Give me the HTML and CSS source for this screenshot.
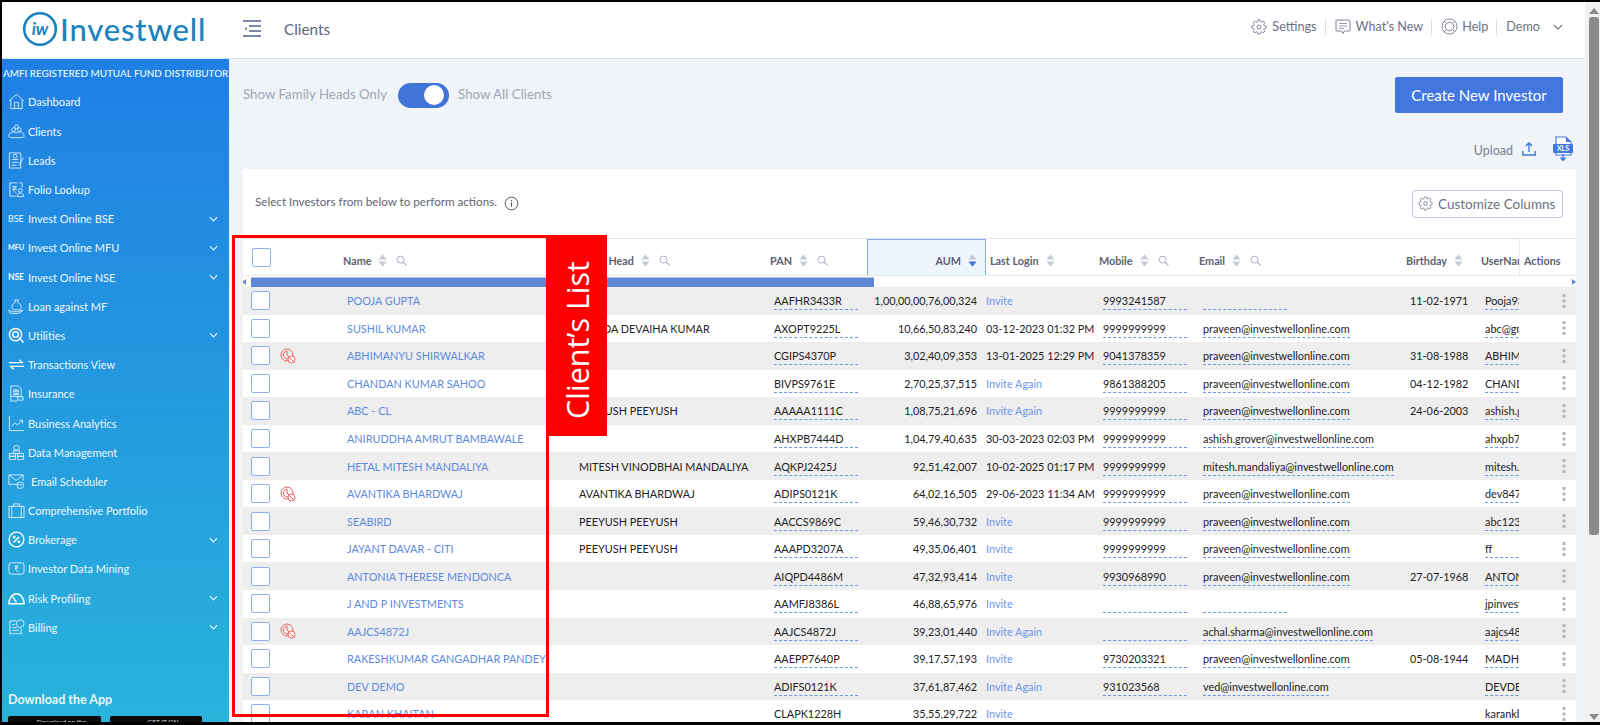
FILE: index.html
```html
<!DOCTYPE html>
<html lang="en">
<head>
<meta charset="utf-8">
<title>Clients</title>
<link rel="stylesheet" href="styles.css">
</head>
<body>
<svg class="defs" aria-hidden="true">
  <symbol id="gear" viewBox="0 0 24 24"><circle cx="12" cy="12" r="3" fill="none" stroke="currentColor" stroke-width="1.5"/><path fill="none" stroke="currentColor" stroke-width="1.5" d="M19.4 15a1.65 1.65 0 0 0 .33 1.82l.06.06a2 2 0 0 1 0 2.83 2 2 0 0 1-2.83 0l-.06-.06a1.65 1.65 0 0 0-1.82-.33 1.65 1.65 0 0 0-1 1.51V21a2 2 0 0 1-2 2 2 2 0 0 1-2-2v-.09A1.65 1.65 0 0 0 9 19.4a1.65 1.65 0 0 0-1.82.33l-.06.06a2 2 0 0 1-2.83 0 2 2 0 0 1 0-2.83l.06-.06a1.65 1.65 0 0 0 .33-1.82 1.65 1.65 0 0 0-1.51-1H3a2 2 0 0 1-2-2 2 2 0 0 1 2-2h.09A1.65 1.65 0 0 0 4.6 9a1.65 1.65 0 0 0-.33-1.82l-.06-.06a2 2 0 0 1 0-2.83 2 2 0 0 1 2.83 0l.06.06a1.65 1.65 0 0 0 1.82.33H9a1.65 1.65 0 0 0 1-1.51V3a2 2 0 0 1 2-2 2 2 0 0 1 2 2v.09a1.65 1.65 0 0 0 1 1.51 1.65 1.65 0 0 0 1.82-.33l.06-.06a2 2 0 0 1 2.83 0 2 2 0 0 1 0 2.83l-.06.06a1.65 1.65 0 0 0-.33 1.82V9a1.65 1.65 0 0 0 1.51 1H21a2 2 0 0 1 2 2 2 2 0 0 1-2 2h-.09a1.65 1.65 0 0 0-1.51 1z"/></symbol>
  <symbol id="sort" viewBox="0 0 10 14"><path d="M5 0l4.5 6H.5zM.5 8h9L5 14z" fill="currentColor"/></symbol>
  <symbol id="search" viewBox="0 0 12 12"><circle cx="5" cy="5" r="3.8" fill="none" stroke="currentColor" stroke-width="1"/><path d="M8 8l3.4 3.4" stroke="currentColor" stroke-width="1.2"/></symbol>
  <symbol id="chev" viewBox="0 0 10 6"><path d="M1 1l4 4 4-4" fill="none" stroke="currentColor" stroke-width="1.3"/></symbol>
  <symbol id="nokyc" viewBox="0 0 16 16"><circle cx="7" cy="7" r="6" fill="none" stroke="#ee5f5f" stroke-width="1"/><path d="M7 7V3.2A3.8 3.8 0 1 0 10 9.5z" fill="none" stroke="#ee5f5f" stroke-width="1"/><circle cx="11.5" cy="11.5" r="3.5" fill="#fff" stroke="#ee5f5f" stroke-width="1"/><path d="M9.2 9.5l4.4 4" stroke="#ee5f5f" stroke-width="1"/></symbol>
  <symbol id="dots" viewBox="0 0 4 14"><path d="M.5 0h3v3h-3zM.5 5.5h3v3h-3zM.5 11h3v3h-3z" fill="#b4b7bd"/></symbol>
</svg>

<div class="frame">
  <div class="page">
    <header class="topbar">
      <div class="logo">
        <svg class="logo-mark" viewBox="0 0 36 36"><circle cx="18" cy="18" r="15.8" fill="none" stroke="#1b82bd" stroke-width="2.6"/><text x="18" y="24" text-anchor="middle" class="logo-iw">iw</text></svg>
        <span class="logo-text">Investwell</span>
      </div>
      <svg class="menu-icon" viewBox="0 0 18 18"><path d="M0 1h18M6 6h12M6 11h12M0 16h18" stroke="#7f88a8" stroke-width="2"/><path d="M4 7l-3 1.7L4 10.500z" fill="#7f88a8"/></svg>
      <span class="page-title">Clients</span>
      <nav class="topnav">
        <a class="nav-item"><svg class="nav-ic"><use href="#gear"/></svg>Settings</a>
        <a class="nav-item"><svg class="nav-ic" viewBox="0 0 16 16"><path d="M2 1h12a1 1 0 0 1 1 1v9a1 1 0 0 1-1 1H9.500L8 14.500 6.500 12H2a1 1 0 0 1-1-1V2a1 1 0 0 1 1-1z" fill="none" stroke="currentColor"/><path d="M4 4.500h8M4 7h8M4 9.500h5" stroke="currentColor" stroke-width=".8"/></svg>What's New</a>
        <a class="nav-item nav-help"><svg class="nav-ic nav-ic-help" viewBox="0 0 18 18"><circle cx="9" cy="9" r="8" fill="none" stroke="currentColor"/><circle cx="9" cy="9" r="4.500" fill="none" stroke="currentColor"/><path d="M3.300 3.300L6 6M14.700 3.300L12 6M3.300 14.700L6 12M14.700 14.700L12 12" stroke="currentColor"/></svg>Help</a>
        <a class="nav-item nav-last">Demo<svg class="nav-chev"><use href="#chev"/></svg></a>
      </nav>
    </header>

    <div class="body">
      <aside class="sidebar">
        <div class="amfi">AMFI REGISTERED MUTUAL FUND DISTRIBUTOR</div>
        <ul class="side-list">
          <li class="side-item"><svg class="si" viewBox="0 0 18 18"><path d="M1 8.500L9 1.500l8 7M3 7.500V16.500h12V7.500M7 16.500V10h4v6.500" /></svg><span>Dashboard</span></li>
          <li class="side-item"><svg class="si" viewBox="0 0 18 18"><circle cx="6" cy="7" r="2"/><circle cx="12" cy="7" r="2"/><circle cx="9" cy="4" r="2"/><path d="M1 14c0-3 2-4.500 4-4.500s3 1 4 1 2-1 4-1 4 1.500 4 4.500c0 1-1 1.500-2 1.500H3c-1 0-2-.5-2-1.500z"/></svg><span>Clients</span></li>
          <li class="side-item"><svg class="si" viewBox="0 0 18 18"><path d="M1.500 1h12v16h-12zM4 8h7M4 11h7M4 14h5"/><circle cx="7.500" cy="4.500" r="2"/><path d="M16.500 6l-5 8"/></svg><span>Leads</span></li>
          <li class="side-item"><svg class="si" viewBox="0 0 18 18"><path d="M10 2H2v14h6M12 2h3v5"/><path d="M4.500 6h5M4.500 8.500h5M5 6c4 0 4 3 0 3l4 4"/><circle cx="13" cy="10" r="2"/><path d="M9.500 16.500c0-5 7-5 7 0z"/></svg><span>Folio Lookup</span></li>
          <li class="side-item"><span class="si-txt si-thin">BSE</span><span>Invest Online BSE</span><svg class="side-chev"><use href="#chev"/></svg></li>
          <li class="side-item"><span class="si-txt si-small">MFU</span><span>Invest Online MFU</span><svg class="side-chev"><use href="#chev"/></svg></li>
          <li class="side-item"><span class="si-txt">NSE</span><span>Invest Online NSE</span><svg class="side-chev"><use href="#chev"/></svg></li>
          <li class="side-item"><svg class="si" viewBox="0 0 18 18"><path d="M7 2l4 0-1 2.500c3 1 4 4 4 5.500 0 2-2 2.500-5 2.500s-5-.5-5-2.500c0-1.500 1-4.500 4-5.500z"/><path d="M1 13l4 1.500h5l6-1.500-5 3.500H4L1 15z"/></svg><span>Loan against MF</span></li>
          <li class="side-item"><svg class="si si-strong" viewBox="0 0 18 18"><circle cx="8" cy="8" r="6.500"/><circle cx="8" cy="8" r="3"/><path d="M11.500 11.500l5 5"/></svg><span>Utilities</span><svg class="side-chev"><use href="#chev"/></svg></li>
          <li class="side-item"><svg class="si si-strong" viewBox="0 0 18 18"><path d="M1 7h14l-3-3M17 11H3l3 3"/></svg><span>Transactions View</span></li>
          <li class="side-item"><svg class="si" viewBox="0 0 18 18"><path d="M3 1h8l3 3v8H3zM3 12v5h7M6 5h2v2H6zM9 5h2v2H9zM6 8.500h2v2H6zM9 8.500h2v2H9zM10 12.500h6v3.500h-6z"/></svg><span>Insurance</span></li>
          <li class="side-item"><svg class="si" viewBox="0 0 18 18"><path d="M1.500 1v15.500H17"/><path d="M4 12l3.500-3.500 2.500 2 5-4.500M12 5.500h3.500V9"/></svg><span>Business Analytics</span></li>
          <li class="side-item"><svg class="si" viewBox="0 0 18 18"><ellipse cx="9" cy="4" rx="3" ry="2.500"/><path d="M6 7h6v3H6zM1.500 10h6.500v3H1.500zM10 10h6.500v3H10zM1.500 13h6.500v3.500H1.500zM10 13h6.500v3.500H10z"/></svg><span>Data Management</span></li>
          <li class="side-item"><svg class="si si-wide" viewBox="0 0 18 18"><path d="M12 12H1V2h15v6M1 2l7.500 6L16 2"/><circle cx="13" cy="13" r="3.500"/><path d="M13 11.500V13h1.500"/></svg><span>Email Scheduler</span></li>
          <li class="side-item"><svg class="si" viewBox="0 0 18 18"><path d="M1 4.500h16v12H1zM6 4.500V2h6v2.500M4 4.500v12M14 4.500v12"/></svg><span>Comprehensive Portfolio</span></li>
          <li class="side-item"><svg class="si si-strong" viewBox="0 0 18 18"><circle cx="9" cy="9" r="7.800"/><path d="M12 6l-6 6"/><circle cx="6.500" cy="6.500" r=".8"/><circle cx="11.500" cy="11.500" r=".8"/></svg><span>Brokerage</span><svg class="side-chev"><use href="#chev"/></svg></li>
          <li class="side-item"><svg class="si" viewBox="0 0 18 18"><rect x="1" y="3" width="16" height="12" rx="2.500"/><path d="M7 6.500h4M7 8.500h4M7.500 6.500c3 0 3 3 0 3l3 3"/></svg><span>Investor Data Mining</span></li>
          <li class="side-item"><svg class="si si-strong" viewBox="0 0 18 18"><path d="M1 14.500C1 9 4.500 4 9 4s8 5 8 10.500zM5 7l4 6"/></svg><span>Risk Profiling</span><svg class="side-chev"><use href="#chev"/></svg></li>
          <li class="side-item"><svg class="si" viewBox="0 0 18 18"><path d="M2 2h7M2 2v14l2-1 2 1 2-1 2 1 2-1 2 1v-6M4.500 6h3M4.500 9h5M4.500 12h7"/><circle cx="13" cy="5" r="4"/></svg><span>Billing</span><svg class="side-chev"><use href="#chev"/></svg></li>
        </ul>
        <div class="download">
          <div class="dl-title">Download the App</div>
          <div class="stores"><span class="store store-a">Download on the</span><span class="store">GET IT ON</span></div>
        </div>
      </aside>

      <main class="main">
        <div class="toolbar">
          <span class="tg-label">Show Family Heads Only</span>
          <span class="toggle"><span class="knob"></span></span>
          <span class="tg-label">Show All Clients</span>
          <button class="create">Create New Investor</button>
        </div>
        <div class="upload-row">
          <span class="upload">Upload</span>
          <svg class="up-ic" viewBox="0 0 14 14"><path d="M7 10V1M3.800 4L7 1l3.200 3M.8 9v4h12.400V9" fill="none" stroke="#4377e0" stroke-width="1.400"/></svg>
          <svg class="xls-ic" viewBox="0 0 20 25"><path d="M3 1h10l5 5v13H3z" fill="#fff" stroke="#4377e0" stroke-width="1.200"/><path d="M13 1v5h5z" fill="#4377e0"/><rect x="0" y="8" width="20" height="9" rx="1" fill="#4377e0"/><text x="10" y="15.200" text-anchor="middle" class="xls-t">XLS</text><path d="M10 18v6M7.500 21.500L10 24.500l2.500-3" fill="none" stroke="#4377e0" stroke-width="1.400"/></svg>
        </div>
        <section class="card">
          <div class="card-top">
            <span class="hint">Select Investors from below to perform actions.</span>
            <svg class="info" viewBox="0 0 16 16"><circle cx="8" cy="8" r="6.800" fill="none" stroke="#555" stroke-width="1"/><path d="M8 7v4.500M8 4.300v1.400" stroke="#555" stroke-width="1.200"/></svg>
            <button class="customize"><svg class="cust-ic"><use href="#gear"/></svg>Customize Columns</button>
          </div>

          <div class="table">
            <div class="tr th">
              <div class="h-sel"><span class="cb cb-h"></span></div>
              <div class="h">Name<svg class="s"><use href="#sort"/></svg><svg class="q"><use href="#search"/></svg></div>
              <div class="h h-fam">Family Head<svg class="s"><use href="#sort"/></svg><svg class="q"><use href="#search"/></svg></div>
              <div class="h">PAN<svg class="s"><use href="#sort"/></svg><svg class="q"><use href="#search"/></svg></div>
              <div class="h h-aum">AUM<svg class="s s-act" viewBox="0 0 10 14"><path d="M5 0l4.500 6H.5z" fill="#c8ccd6"/><path d="M.5 8h9L5 14z" fill="#4377e0"/></svg></div>
              <div class="h">Last Login<svg class="s"><use href="#sort"/></svg></div>
              <div class="h">Mobile<svg class="s"><use href="#sort"/></svg><svg class="q"><use href="#search"/></svg></div>
              <div class="h">Email<svg class="s"><use href="#sort"/></svg><svg class="q"><use href="#search"/></svg></div>
              <div class="h">Birthday<svg class="s"><use href="#sort"/></svg></div>
              <div class="h h-clip">UserName</div>
              <div class="h h-act">Actions</div>
            </div>
            <div class="hscroll"><span class="arr-l"></span><span class="bar"></span><span class="arr-r"></span></div>

            <div class="tr"><div class="sel"><span class="cb"></span></div><div class="nm">POOJA GUPTA</div><div class="fam"></div><div class="pan"><span class="dash">AAFHR3433R</span></div><div class="aum">1,00,00,00,76,00,324</div><div class="last inv">Invite</div><div class="pad"><span class="dash">9993241587</span></div><div class="pad"><span class="dash"></span></div><div class="pad">11-02-1971</div><div class="usr"><span class="dash">Pooja93241</span></div><div class="act"><svg class="dots"><use href="#dots"/></svg></div></div>
            <div class="tr"><div class="sel"><span class="cb"></span></div><div class="nm">SUSHIL KUMAR</div><div class="fam">NANDA DEVAIHA KUMAR</div><div class="pan"><span class="dash">AXOPT9225L</span></div><div class="aum">10,66,50,83,240</div><div class="last">03-12-2023 01:32 PM</div><div class="pad"><span class="dash">9999999999</span></div><div class="pad"><span class="dash">praveen@investwellonline.com</span></div><div class="pad"></div><div class="usr"><span class="dash">abc@gmail.com</span></div><div class="act"><svg class="dots"><use href="#dots"/></svg></div></div>
            <div class="tr"><div class="sel"><span class="cb"></span><svg class="flag"><use href="#nokyc"/></svg></div><div class="nm">ABHIMANYU SHIRWALKAR</div><div class="fam"></div><div class="pan"><span class="dash">CGIPS4370P</span></div><div class="aum">3,02,40,09,353</div><div class="last">13-01-2025 12:29 PM</div><div class="pad"><span class="dash">9041378359</span></div><div class="pad"><span class="dash">praveen@investwellonline.com</span></div><div class="pad">31-08-1988</div><div class="usr"><span class="dash">ABHIMANYU</span></div><div class="act"><svg class="dots"><use href="#dots"/></svg></div></div>
            <div class="tr"><div class="sel"><span class="cb"></span></div><div class="nm">CHANDAN KUMAR SAHOO</div><div class="fam"></div><div class="pan"><span class="dash">BIVPS9761E</span></div><div class="aum">2,70,25,37,515</div><div class="last inv">Invite Again</div><div class="pad"><span class="dash">9861388205</span></div><div class="pad"><span class="dash">praveen@investwellonline.com</span></div><div class="pad">04-12-1982</div><div class="usr"><span class="dash">CHANDAN</span></div><div class="act"><svg class="dots"><use href="#dots"/></svg></div></div>
            <div class="tr"><div class="sel"><span class="cb"></span></div><div class="nm">ABC - CL</div><div class="fam">PEEYUSH PEEYUSH</div><div class="pan"><span class="dash">AAAAA1111C</span></div><div class="aum">1,08,75,21,696</div><div class="last inv">Invite Again</div><div class="pad"><span class="dash">9999999999</span></div><div class="pad"><span class="dash">praveen@investwellonline.com</span></div><div class="pad">24-06-2003</div><div class="usr"><span class="dash">ashish.grover</span></div><div class="act"><svg class="dots"><use href="#dots"/></svg></div></div>
            <div class="tr"><div class="sel"><span class="cb"></span></div><div class="nm">ANIRUDDHA AMRUT BAMBAWALE</div><div class="fam"></div><div class="pan"><span class="dash">AHXPB7444D</span></div><div class="aum">1,04,79,40,635</div><div class="last">30-03-2023 02:03 PM</div><div class="pad"><span class="dash">9999999999</span></div><div class="pad"><span class="dash">ashish.grover@investwellonline.com</span></div><div class="pad"></div><div class="usr"><span class="dash">ahxpb7444d</span></div><div class="act"><svg class="dots"><use href="#dots"/></svg></div></div>
            <div class="tr"><div class="sel"><span class="cb"></span></div><div class="nm">HETAL MITESH MANDALIYA</div><div class="fam">MITESH VINODBHAI MANDALIYA</div><div class="pan"><span class="dash">AQKPJ2425J</span></div><div class="aum">92,51,42,007</div><div class="last">10-02-2025 01:17 PM</div><div class="pad"><span class="dash">9999999999</span></div><div class="pad"><span class="dash">mitesh.mandaliya@investwellonline.com</span></div><div class="pad"></div><div class="usr"><span class="dash">mitesh.mandaliya</span></div><div class="act"><svg class="dots"><use href="#dots"/></svg></div></div>
            <div class="tr"><div class="sel"><span class="cb"></span><svg class="flag"><use href="#nokyc"/></svg></div><div class="nm">AVANTIKA BHARDWAJ</div><div class="fam">AVANTIKA BHARDWAJ</div><div class="pan"><span class="dash">ADIPS0121K</span></div><div class="aum">64,02,16,505</div><div class="last">29-06-2023 11:34 AM</div><div class="pad"><span class="dash">9999999999</span></div><div class="pad"><span class="dash">praveen@investwellonline.com</span></div><div class="pad"></div><div class="usr"><span class="dash">dev84700</span></div><div class="act"><svg class="dots"><use href="#dots"/></svg></div></div>
            <div class="tr"><div class="sel"><span class="cb"></span></div><div class="nm">SEABIRD</div><div class="fam">PEEYUSH PEEYUSH</div><div class="pan"><span class="dash">AACCS9869C</span></div><div class="aum">59,46,30,732</div><div class="last inv">Invite</div><div class="pad"><span class="dash">9999999999</span></div><div class="pad"><span class="dash">praveen@investwellonline.com</span></div><div class="pad"></div><div class="usr"><span class="dash">abc12345</span></div><div class="act"><svg class="dots"><use href="#dots"/></svg></div></div>
            <div class="tr"><div class="sel"><span class="cb"></span></div><div class="nm">JAYANT DAVAR - CITI</div><div class="fam">PEEYUSH PEEYUSH</div><div class="pan"><span class="dash">AAAPD3207A</span></div><div class="aum">49,35,06,401</div><div class="last inv">Invite</div><div class="pad"><span class="dash">9999999999</span></div><div class="pad"><span class="dash">praveen@investwellonline.com</span></div><div class="pad"></div><div class="usr"><span class="dash">ff</span></div><div class="act"><svg class="dots"><use href="#dots"/></svg></div></div>
            <div class="tr"><div class="sel"><span class="cb"></span></div><div class="nm">ANTONIA THERESE MENDONCA</div><div class="fam"></div><div class="pan"><span class="dash">AIQPD4486M</span></div><div class="aum">47,32,93,414</div><div class="last inv">Invite</div><div class="pad"><span class="dash">9930968990</span></div><div class="pad"><span class="dash">praveen@investwellonline.com</span></div><div class="pad">27-07-1968</div><div class="usr"><span class="dash">ANTONIA</span></div><div class="act"><svg class="dots"><use href="#dots"/></svg></div></div>
            <div class="tr"><div class="sel"><span class="cb"></span></div><div class="nm">J AND P INVESTMENTS</div><div class="fam"></div><div class="pan"><span class="dash">AAMFJ8386L</span></div><div class="aum">46,88,65,976</div><div class="last inv">Invite</div><div class="pad"><span class="dash"></span></div><div class="pad"><span class="dash"></span></div><div class="pad"></div><div class="usr"><span class="dash">jpinvestments</span></div><div class="act"><svg class="dots"><use href="#dots"/></svg></div></div>
            <div class="tr"><div class="sel"><span class="cb"></span><svg class="flag"><use href="#nokyc"/></svg></div><div class="nm">AAJCS4872J</div><div class="fam"></div><div class="pan"><span class="dash">AAJCS4872J</span></div><div class="aum">39,23,01,440</div><div class="last inv">Invite Again</div><div class="pad"><span class="dash"></span></div><div class="pad"><span class="dash">achal.sharma@investwellonline.com</span></div><div class="pad"></div><div class="usr"><span class="dash">aajcs4872j</span></div><div class="act"><svg class="dots"><use href="#dots"/></svg></div></div>
            <div class="tr"><div class="sel"><span class="cb"></span></div><div class="nm">RAKESHKUMAR GANGADHAR PANDEY</div><div class="fam"></div><div class="pan"><span class="dash">AAEPP7640P</span></div><div class="aum">39,17,57,193</div><div class="last inv">Invite</div><div class="pad"><span class="dash">9730203321</span></div><div class="pad"><span class="dash">praveen@investwellonline.com</span></div><div class="pad">05-08-1944</div><div class="usr"><span class="dash">MADHU</span></div><div class="act"><svg class="dots"><use href="#dots"/></svg></div></div>
            <div class="tr"><div class="sel"><span class="cb"></span></div><div class="nm">DEV DEMO</div><div class="fam"></div><div class="pan"><span class="dash">ADIFS0121K</span></div><div class="aum">37,61,87,462</div><div class="last inv">Invite Again</div><div class="pad"><span class="dash">931023568</span></div><div class="pad"><span class="dash">ved@investwellonline.com</span></div><div class="pad"></div><div class="usr"><span class="dash">DEVDEMO</span></div><div class="act"><svg class="dots"><use href="#dots"/></svg></div></div>
            <div class="tr"><div class="sel"><span class="cb"></span></div><div class="nm">KARAN KHAITAN</div><div class="fam"></div><div class="pan"><span class="dash">CLAPK1228H</span></div><div class="aum">35,55,29,722</div><div class="last inv">Invite</div><div class="pad"><span class="dash"></span></div><div class="pad"><span class="dash"></span></div><div class="pad"></div><div class="usr"><span class="dash">karankhaitan</span></div><div class="act"><svg class="dots"><use href="#dots"/></svg></div></div>
          </div>
        </section>
      </main>
    </div>
  </div>

  <div class="vscroll"><span class="vs-up"></span><span class="vs-thumb"></span><span class="vs-down"></span></div>

  <div class="callout-box"></div>
  <div class="callout-tag"><span class="callout-text">Client’s List</span></div>
</div>
</body>
</html>
```
FILE: styles.css
```css
* { box-sizing: border-box; }
html, body { margin: 0; height: 100%; overflow: hidden; }
body { font-family: Lato, "Open Sans", sans-serif; font-size: 10.85px; color: #222; background: #000; }
.defs { position: absolute; width: 0; height: 0; }

.frame { position: relative; width: 1600px; height: 725px; display: flex; border-top: 2px solid #000; border-left: 2px solid #000; border-bottom: 3px solid #000; background: #f0f3f8; overflow: hidden; }
.page { flex: 1; min-width: 0; display: flex; flex-direction: column; }

/* top bar */
.topbar { height: 57px; flex: none; background: #fff; border-bottom: 1px solid #dde1ea; display: flex; align-items: center; padding-left: 20px; }
.logo { display: flex; align-items: center; width: 221px; padding-bottom: 2px; }
.logo-mark { width: 36px; height: 36px; flex: none; }
.logo-iw { font: italic 700 17px Lato, sans-serif; fill: #1b82bd; }
.logo-text { font-size: 31px; line-height: 36px; letter-spacing: .85px; font-weight: 500; color: #1b82bd; margin-left: 2px; }
.menu-icon { width: 18px; height: 18px; flex: none; margin-bottom: 2px; }
.page-title { font-size: 15.3px; color: #5d6478; margin-left: 23px; margin-bottom: 2px; }
.topnav { margin-left: auto; margin-right: 22px; display: flex; align-items: center; margin-bottom: 7px; color: #6b7085; font-size: 12.6px; }
.nav-item { display: flex; align-items: center; height: 16px; padding: 0 8px 0 9px; border-right: 1px solid #d9dce4; }
.nav-ic { width: 16px; height: 16px; margin-right: 5px; color: #7b8094; }
.nav-ic-help { width: 17px; height: 17px; margin-right: 4px; }
.nav-last { border-right: 0; padding-right: 0; }
.nav-chev { width: 10px; height: 6px; margin-left: 13px; color: #7b8094; }

.body { flex: 1; min-height: 0; display: flex; }

/* sidebar */
.sidebar { width: 227px; flex: none; display: flex; flex-direction: column; background: linear-gradient(180deg, #1f7fe4 0%, #29b3da 100%); color: #eef8fe; overflow: hidden; }
.amfi { height: 28.4px; padding: 8px 0 0 1px; font-size: 9.9px; font-weight: 500; line-height: 13px; white-space: nowrap; }
.side-list { list-style: none; margin: 0; padding: 0; }
.side-item { height: 29.2px; display: flex; align-items: center; padding-left: 6px; font-size: 11px; }
.si { width: 17px; height: 17px; flex: none; margin-right: 3px; fill: none; stroke: #e6f5fd; stroke-width: .9; }
.si-strong { stroke-width: 1.5; stroke: #fff; }
.si-wide { margin-right: 6px; }
.si-txt { width: 20px; flex: none; font-size: 8.500px; font-weight: 700; margin-right: 0; letter-spacing: -.1px; }
.si-thin { font-weight: 400; font-size: 9px; }
.si-small { font-size: 7.200px; }
.side-chev { width: 9px; height: 6px; margin-left: auto; margin-right: 11px; color: #e6f5fd; }
.download { margin-top: auto; padding-left: 6px; height: 29.8px; }
.dl-title { font-size: 12.5px; font-weight: 700; line-height: 16px; color: #e8f7fd; }
.stores { display: flex; gap: 9px; margin-top: 8px; }
.store { width: 92px; height: 24px; flex: none; border-radius: 2px; background: #0a0a0a; color: #ddd; font-size: 6.500px; text-align: center; padding-top: 2px; padding-left: 14px; line-height: 8px; }
.store-a { width: 93px; }

/* main */
.main { flex: 1; min-width: 0; padding: 18px 9px 0 14px; display: flex; flex-direction: column; overflow: hidden; }
.toolbar { display: flex; align-items: center; height: 36px; margin-bottom: 23px; }
.tg-label { font-size: 13.3px; color: #a0a6b4; margin-bottom: 3px; }
.toggle { width: 51px; height: 25px; margin: 0 9px 0 11px; border-radius: 13px; background: #3f74d8; display: flex; align-items: center; justify-content: flex-end; padding-right: 5px; }
.knob { width: 20px; height: 20px; border-radius: 50%; background: #fff; }
.create { margin-left: auto; margin-right: 13px; width: 168px; height: 36px; border: 0; border-radius: 2px; background: #4377e0; color: #fff; font: 400 15px Lato, sans-serif; padding: 0; }
.upload-row { display: flex; align-items: center; justify-content: flex-end; height: 25px; margin-bottom: 8px; padding-right: 3px; }
.upload { font-size: 12.500px; color: #7a8090; margin: 3px 9px 0 0; }
.up-ic { width: 14px; height: 14px; margin-right: 17px; }
.xls-ic { width: 20px; height: 25px; }
.xls-t { font: 700 7px Lato, sans-serif; fill: #fff; }

.card { background: #fff; flex: 1; min-height: 0; display: flex; flex-direction: column; overflow: hidden; }
.card-top { height: 69px; flex: none; display: flex; align-items: center; padding: 0 13px 0 12px; }
.hint { font-size: 11.65px; color: #5f6470; margin-bottom: 5px; }
.info { width: 15px; height: 15px; margin-left: 7px; margin-bottom: 1px; }
.customize { margin-left: auto; width: 151px; height: 28px; display: flex; align-items: center; padding: 0 0 0 5px; border: 1px solid #bcc7e6; border-radius: 4px; background: #fff; color: #6b7085; font: 400 13.500px Lato, sans-serif; white-space: nowrap; }
.cust-ic { width: 15px; height: 15px; margin-right: 5px; color: #7b8094; }

/* table */
.table { flex: 1; min-height: 0; overflow: hidden; border-top: 1px solid #dfe2ea; }
.tr { display: grid; grid-template-columns: 96px 236px 191px 101px 119px 109px 100px 207px 75px 42px 57px; height: 27.55px; align-items: center; }
.tr:nth-child(odd) { background: #eee; }
.tr > div { white-space: nowrap; overflow: hidden; }
.th { height: 37px; background: #fff !important; align-items: stretch; border-bottom: 1px solid #e8e8e8; }
.th > div { display: flex; align-items: center; }
.h { padding: 6px 0 0 4px; font-weight: 700; font-size: 10.8px; color: #5d6272; }
.h-fam { padding-left: 0; }
.h-sel { padding-left: 9px; }
.h-aum { justify-content: flex-end; background: #eff5fe; border: 1px solid #86ade9; border-bottom: 0; padding-right: 8px; }
.h-clip { overflow: hidden; }
.h-act { border-left: 1px solid #e8e8e8; }
.s { width: 9px; height: 13px; margin-left: 7px; flex: none; color: #c8ccd6; }
.s-act { margin-left: 7px; }
.q { width: 11px; height: 11px; margin-left: 9px; flex: none; color: #a3a9bc; }

.hscroll { height: 11px; background: #fff; display: flex; align-items: center; }
.arr-l { width: 0; height: 0; margin-left: -1px; border: 3px solid transparent; border-left-width: 0; border-right: 4px solid #5f8ad6; }
.bar { width: 623px; height: 10px; margin-left: 5px; background: #5f88d6; border-top: 1px solid #b9c2d6; }
.arr-r { width: 0; height: 0; margin-left: auto; border: 3px solid transparent; border-right-width: 0; border-left: 4px solid #5f8ad6; }

.cb { display: block; width: 19px; height: 19px; flex: none; background: #fff; border: 1.500px solid #8fb0ee; border-radius: 2px; }
.sel { display: flex; align-items: center; padding-left: 8px; height: 100%; }
.flag { width: 16px; height: 16px; margin-left: 10px; flex: none; }
.nm { padding-left: 8px; font-size: 10.85px; color: #5d8ae0; }
.fam { padding-left: 4px; }
.pan { padding-left: 8px; }
.aum { text-align: right; padding-right: 9px; }
.inv { color: #6f95e8; }
.pad { padding-left: 8px; }
.usr { padding-left: 8px; }
.act { display: flex; justify-content: flex-start; }
.dash { display: inline-block; min-width: 84px; height: 19px; line-height: 20px; vertical-align: top; border-bottom: 1px dashed #6f97e6; }
.dots { width: 4px; height: 14px; margin-left: 43px; }

/* page scrollbar */
.vscroll { width: 15px; flex: none; background: #f1f1f1; display: flex; flex-direction: column; align-items: center; padding-left: 2px; }
.vs-up { width: 0; height: 0; margin-top: 6px; border: 5px solid transparent; border-top: 0; border-bottom: 6px solid #8a8a8a; }
.vs-thumb { width: 10px; height: 518px; margin-top: 3px; background: #8a8a8a; border-radius: 3px; }
.vs-down { width: 0; height: 0; margin-top: auto; margin-bottom: 2px; border: 5px solid transparent; border-bottom: 0; border-top: 6px solid #8a8a8a; }

/* callout annotation over the table */
.callout-box { position: absolute; left: 230px; top: 233px; width: 317px; height: 482px; border: 3px solid #f00; pointer-events: none; }
.callout-tag { position: absolute; left: 545px; top: 233px; width: 60px; height: 201px; padding-top: 9px; background: #f00; display: flex; align-items: center; justify-content: center; }
.callout-text { display: block; color: #fff; font-size: 30.5px; font-family: "Open Sans", sans-serif; font-weight: 400; white-space: nowrap; transform: rotate(-90deg); }
```
